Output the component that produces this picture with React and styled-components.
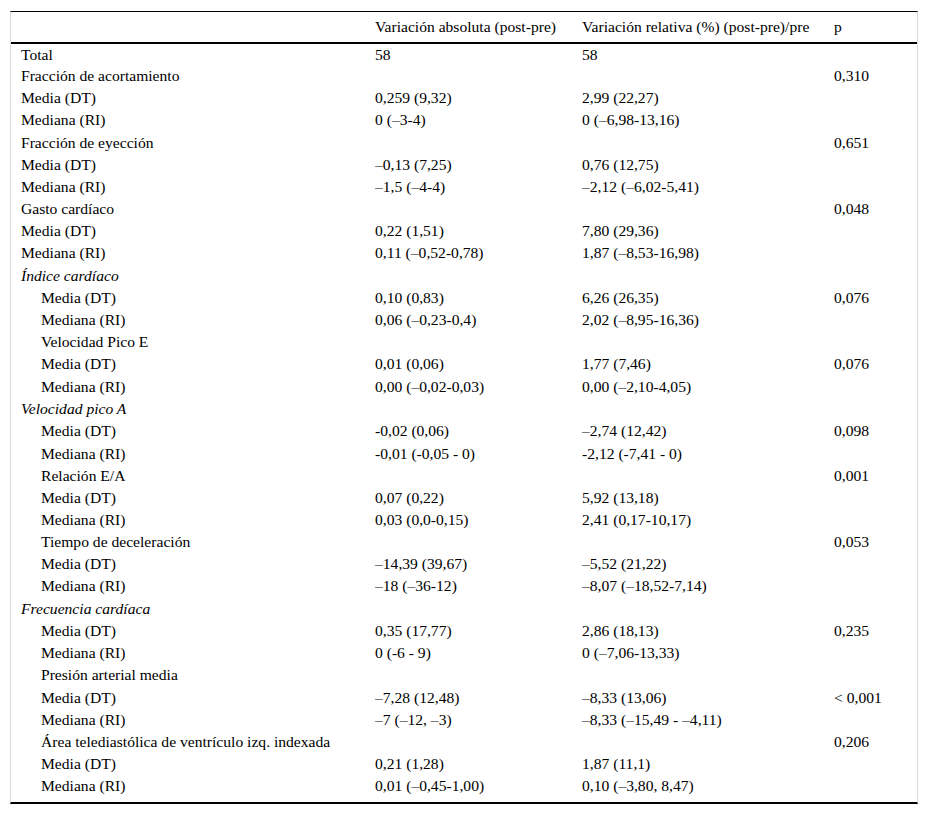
import styled, { createGlobalStyle } from "styled-components";

const GlobalStyle = createGlobalStyle`
  html, body {
    margin: 0;
    padding: 0;
    background: #fff;
  }
  body {
    font-family: "Liberation Serif", "Times New Roman", serif;
    color: #000;
  }
`;

const Page = styled.div`
  padding: 11px 10px 0 10px;
  width: 928px;
  box-sizing: border-box;
`;

const Frame = styled.div`
  border-left: 1px solid #d9d9d9;
  border-right: 1px solid #d9d9d9;
  border-top: 1px solid #000;
  border-bottom: 2px solid #000;
  padding-bottom: 5px;
`;

const Table = styled.table`
  width: 100%;
  border-collapse: collapse;
  font-size: 15.6px;
  table-layout: fixed;
`;

const HeadCell = styled.th`
  text-align: left;
  font-weight: normal;
  height: 30px;
  padding: 0;
  padding-left: ${(p) => p.$pad || 0}px;
  border-bottom: 2px solid #000;
  white-space: nowrap;
  line-height: 18px;
`;

const Row = styled.tr`
  height: ${(p) => (p.$tall ? 22.6 : 22.15)}px;
`;

const Cell = styled.td`
  padding: 0;
  padding-left: ${(p) => p.$pad || 0}px;
  font-style: ${(p) => (p.$italic ? "italic" : "normal")};
  white-space: nowrap;
  vertical-align: middle;
  line-height: 18px;
`;

const rows = [
  ["Total", "58", "58", ""],
  ["Fracción de acortamiento", "", "", "0,310"],
  ["Media (DT)", "0,259 (9,32)", "2,99 (22,27)", ""],
  ["Mediana (RI)", "0 (–3-4)", "0 (–6,98-13,16)", ""],
  ["Fracción de eyección", "", "", "0,651"],
  ["Media (DT)", "–0,13 (7,25)", "0,76 (12,75)", ""],
  ["Mediana (RI)", "–1,5 (–4-4)", "–2,12 (–6,02-5,41)", ""],
  ["Gasto cardíaco", "", "", "0,048"],
  ["Media (DT)", "0,22 (1,51)", "7,80 (29,36)", ""],
  ["Mediana (RI)", "0,11 (–0,52-0,78)", "1,87 (–8,53-16,98)", ""],
  ["Índice cardíaco", "", "", "", "i"],
  ["Media (DT)", "0,10 (0,83)", "6,26 (26,35)", "0,076", "s"],
  ["Mediana (RI)", "0,06 (–0,23-0,4)", "2,02 (–8,95-16,36)", "", "s"],
  ["Velocidad Pico E", "", "", "", "s"],
  ["Media (DT)", "0,01 (0,06)", "1,77 (7,46)", "0,076", "s"],
  ["Mediana (RI)", "0,00 (–0,02-0,03)", "0,00 (–2,10-4,05)", "", "s"],
  ["Velocidad pico A", "", "", "", "i"],
  ["Media (DT)", "-0,02 (0,06)", "–2,74 (12,42)", "0,098", "s"],
  ["Mediana (RI)", "-0,01 (-0,05 - 0)", "-2,12 (-7,41 - 0)", "", "s"],
  ["Relación E/A", "", "", "0,001", "s"],
  ["Media (DT)", "0,07 (0,22)", "5,92 (13,18)", "", "s"],
  ["Mediana (RI)", "0,03 (0,0-0,15)", "2,41 (0,17-10,17)", "", "s"],
  ["Tiempo de deceleración", "", "", "0,053", "s"],
  ["Media (DT)", "–14,39 (39,67)", "–5,52 (21,22)", "", "s"],
  ["Mediana (RI)", "–18 (–36-12)", "–8,07 (–18,52-7,14)", "", "s"],
  ["Frecuencia cardíaca", "", "", "", "i"],
  ["Media (DT)", "0,35 (17,77)", "2,86 (18,13)", "0,235", "s"],
  ["Mediana (RI)", "0 (-6 - 9)", "0 (–7,06-13,33)", "", "s"],
  ["Presión arterial media", "", "", "", "s"],
  ["Media (DT)", "–7,28 (12,48)", "–8,33 (13,06)", "< 0,001", "s"],
  ["Mediana (RI)", "–7 (–12, –3)", "–8,33 (–15,49 - –4,11)", "", "s"],
  ["Área telediastólica de ventrículo izq. indexada", "", "", "0,206", "s"],
  ["Media (DT)", "0,21 (1,28)", "1,87 (11,1)", "", "s"],
  ["Mediana (RI)", "0,01 (–0,45-1,00)", "0,10 (–3,80, 8,47)", "", "s"],
];

export default function App() {
  return (
    <Page>
      <GlobalStyle />
      <Frame>
        <Table>
          <colgroup>
            <col style={{ width: 364 }} />
            <col style={{ width: 207 }} />
            <col style={{ width: 252 }} />
            <col />
          </colgroup>
          <thead>
            <tr>
              <HeadCell $pad={10}></HeadCell>
              <HeadCell>Variación absoluta (post-pre)</HeadCell>
              <HeadCell>Variación relativa (%) (post-pre)/pre</HeadCell>
              <HeadCell>p</HeadCell>
            </tr>
          </thead>
          <tbody>
            {rows.map(([label, a, b, p, kind], i) => (
              <Row key={i} $tall={kind === "i"}>
                <Cell $pad={kind === "s" ? 30 : 10} $italic={kind === "i"}>
                  {label}
                </Cell>
                <Cell>{a}</Cell>
                <Cell>{b}</Cell>
                <Cell>{p}</Cell>
              </Row>
            ))}
          </tbody>
        </Table>
      </Frame>
    </Page>
  );
}
